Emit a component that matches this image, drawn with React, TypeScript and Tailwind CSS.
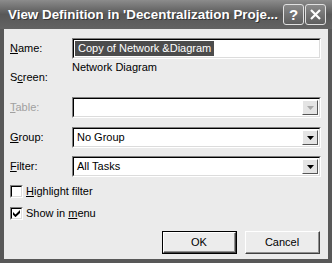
import type { ReactNode } from "react";

const FONT = { fontFamily: '"Liberation Sans", Arial, sans-serif' };

function Label({ children, disabled }: { children: ReactNode; disabled?: boolean }) {
  return (
    <div className={`w-[62px] shrink-0 text-[11px] leading-[13px] ${disabled ? "text-[#a0a0a0]" : "text-black"}`}>
      {children}
    </div>
  );
}

function ComboArrow({ disabled }: { disabled?: boolean }) {
  return (
    <div className="flex h-full w-[16px] items-center justify-center border-t border-l border-b border-r border-t-white border-l-white border-b-[#555] border-r-[#555] bg-[#e4e4e4]">
      <svg width="7" height="4" viewBox="0 0 7 4">
        <path d="M0 0h7L3.5 4z" fill={disabled ? "#a8a8a8" : "#000"} />
      </svg>
    </div>
  );
}

function Combo({ value, disabled }: { value?: string; disabled?: boolean }) {
  return (
    <div className="flex h-[21px] w-[249px] border-t border-l border-b border-r border-t-[#808080] border-l-[#808080] border-b-white border-r-white">
      <div className="flex flex-1 border-t border-l border-b border-r border-t-black border-l-black border-b-[#dcdcdc] border-r-[#dcdcdc] bg-white">
        <div className="flex flex-1 items-center pl-[3px] text-[11px] leading-[13px] text-black">{value}</div>
        <div className="py-[1px] pr-[1px]">
          <ComboArrow disabled={disabled} />
        </div>
      </div>
    </div>
  );
}

function Check({ checked, children }: { checked?: boolean; children: ReactNode }) {
  return (
    <div className="flex h-[13px] items-center gap-[3px]">
      <div className="flex h-[13px] w-[13px] items-center justify-center border-t border-l border-b border-r border-t-[#808080] border-l-[#808080] border-b-white border-r-white">
        <div className="flex h-[11px] w-[11px] items-center justify-center border-t border-l border-b border-r border-t-black border-l-black border-b-[#dcdcdc] border-r-[#dcdcdc] bg-white">
          {checked ? (
            <svg width="7" height="7" viewBox="0 0 7 7">
              <path d="M0 2l2.5 2.5L7 0v3L2.5 7.2 0 4.8z" fill="#000" />
            </svg>
          ) : null}
        </div>
      </div>
      <div className="text-[11px] leading-[13px] text-black">{children}</div>
    </div>
  );
}

function Btn({ children, isDefault }: { children: ReactNode; isDefault?: boolean }) {
  return (
    <div className={`h-[23px] w-[75px] ${isDefault ? "border border-black" : ""}`}>
      <div className="flex h-full w-full border-t border-l border-b border-r border-t-white border-l-white border-b-[#404040] border-r-[#404040] bg-[#ececec]">
        <div className="flex flex-1 items-center justify-center border-b border-r border-b-[#909090] border-r-[#909090] text-[11px] leading-[13px] text-black">
          {children}
        </div>
      </div>
    </div>
  );
}

function TitleButton({ children }: { children: ReactNode }) {
  return (
    <div className="flex h-[21px] w-[21px] items-center justify-center rounded-[3px] border border-[#e0e0e0] bg-linear-to-b from-[#8a8a8a] to-[#5e5e5e]">
      {children}
    </div>
  );
}

export default function App() {
  return (
    <div className="flex h-[263px] w-[332px] flex-col bg-[#585858]" style={FONT}>
      <div className="flex h-[29px] shrink-0 items-center justify-between bg-linear-to-b from-[#8c8c8c] via-[#585858] to-[#636363] pl-[8px] pr-[6px]">
        <div className="pt-[1px] text-[13.4px] font-bold text-white [text-shadow:1px_1px_0_#333]">
          View Definition in 'Decentralization Proje...
        </div>
        <div className="flex gap-[1px]">
          <TitleButton>
            <span className="text-[15px] font-bold leading-none text-white">?</span>
          </TitleButton>
          <TitleButton>
            <svg width="11" height="11" viewBox="0 0 11 11">
              <path d="M1 1l9 9M10 1l-9 9" stroke="#fff" strokeWidth="2.2" />
            </svg>
          </TitleButton>
        </div>
      </div>

      <div className="mx-[4px] mb-[4px] flex flex-1 flex-col bg-[#ebebeb] pl-[6px] pr-[7px] pt-[9px]">
        <div className="flex h-[21px] items-center">
          <Label>
            <span className="underline">N</span>ame:
          </Label>
          <div className="flex h-[21px] w-[249px] border-t border-l border-b border-r border-t-[#808080] border-l-[#808080] border-b-white border-r-white">
            <div className="flex flex-1 items-center border-t border-l border-b border-r border-t-black border-l-black border-b-[#dcdcdc] border-r-[#dcdcdc] bg-white pl-[1px]">
              <span className="bg-[#4c4c4c] px-[3px] text-[11px] leading-[15px] text-white">Copy of Network &amp;Diagram</span>
            </div>
          </div>
        </div>

        <div className="flex h-[38px] items-start">
          <div className="mt-[12px]">
            <Label>
              S<span className="underline">c</span>reen:
            </Label>
          </div>
          <div className="mt-[2px] text-[11px] leading-[13px] text-black">Network Diagram</div>
        </div>

        <div className="flex h-[21px] items-center">
          <Label disabled>
            <span className="underline">T</span>able:
          </Label>
          <Combo disabled />
        </div>

        <div className="mt-[9px] flex h-[21px] items-center">
          <Label>
            <span className="underline">G</span>roup:
          </Label>
          <Combo value="No Group" />
        </div>

        <div className="mt-[8px] flex h-[21px] items-center">
          <Label>
            <span className="underline">F</span>ilter:
          </Label>
          <Combo value="All Tasks" />
        </div>

        <div className="mt-[8px]">
          <Check>
            <span className="underline">H</span>ighlight filter
          </Check>
        </div>
        <div className="mt-[9px]">
          <Check checked>
            Show in <span className="underline">m</span>enu
          </Check>
        </div>

        <div className="mr-[1px] mt-[11px] flex justify-end gap-[8px]">
          <Btn isDefault>OK</Btn>
          <Btn>Cancel</Btn>
        </div>
      </div>
    </div>
  );
}
